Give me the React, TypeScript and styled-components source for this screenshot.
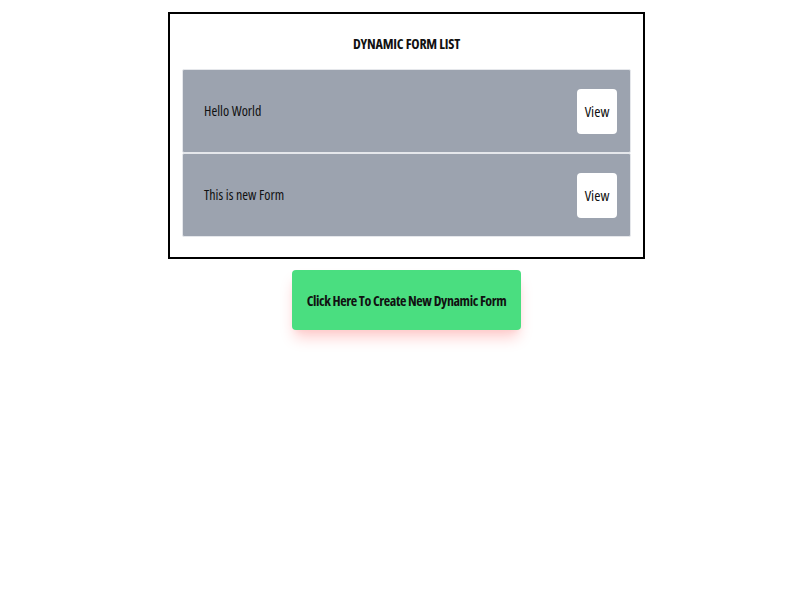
import React from "react";
import styled, { createGlobalStyle } from "styled-components";

const Global = createGlobalStyle`
  html, body {
    margin: 0;
    background: #ffffff;
  }
  body {
    font-family: "Open Sans", "Liberation Sans", sans-serif;
    font-stretch: 75%;
    color: #111;
  }
`;

const Page = styled.div`
  box-sizing: border-box;
  min-height: 100vh;
  display: flex;
  flex-direction: column;
  align-items: center;
  padding: 12px 0 0 13px;
`;

const ListBox = styled.section`
  box-sizing: border-box;
  width: 477px;
  border: 2px solid #000;
  padding: 0 12px 20px 12px;
  display: flex;
  flex-direction: column;
`;

const Title = styled.h2`
  margin: 0;
  height: 55px;
  display: flex;
  align-items: center;
  justify-content: center;
  font-size: 14px;
  font-weight: 700;
  letter-spacing: -0.2px;
  padding-top: 4px;
  box-sizing: border-box;
`;

const Rows = styled.div`
  display: flex;
  flex-direction: column;
`;

const Row = styled.div`
  box-sizing: border-box;
  height: 84px;
  display: flex;
  align-items: center;
  justify-content: space-between;
  background: #9ca3af;
  border: 1px solid #e5e7eb;
  border-radius: 2px;
  padding: 0 13px 0 21px;
  font-size: 14px;
`;

const Name = styled.span`
  color: #111;
  padding-bottom: 1px;
`;

const ViewButton = styled.button`
  box-sizing: border-box;
  width: 40px;
  height: 45px;
  border: none;
  border-radius: 4px;
  background: #ffffff;
  font-family: inherit;
  font-stretch: inherit;
  font-size: 15px;
  color: #111;
  padding: 0;
  cursor: pointer;
`;

const CreateButton = styled.button`
  box-sizing: border-box;
  margin-top: 11px;
  width: 229px;
  height: 60px;
  border: none;
  border-radius: 4px;
  background: #4ade80;
  font-family: inherit;
  font-stretch: inherit;
  font-size: 14px;
  font-weight: 700;
  letter-spacing: -0.4px;
  white-space: nowrap;
  color: #111;
  box-shadow: 0 10px 15px -3px #fecaca, 0 4px 6px -4px #fecaca;
  cursor: pointer;
`;

const forms = ["Hello World", "This is new Form"];

export default function App() {
  return (
    <>
      <Global />
      <Page>
        <ListBox>
          <Title>DYNAMIC FORM LIST</Title>
          <Rows>
            {forms.map((f) => (
              <Row key={f}>
                <Name>{f}</Name>
                <ViewButton>View</ViewButton>
              </Row>
            ))}
          </Rows>
        </ListBox>
        <CreateButton>Click Here To Create New Dynamic Form</CreateButton>
      </Page>
    </>
  );
}
